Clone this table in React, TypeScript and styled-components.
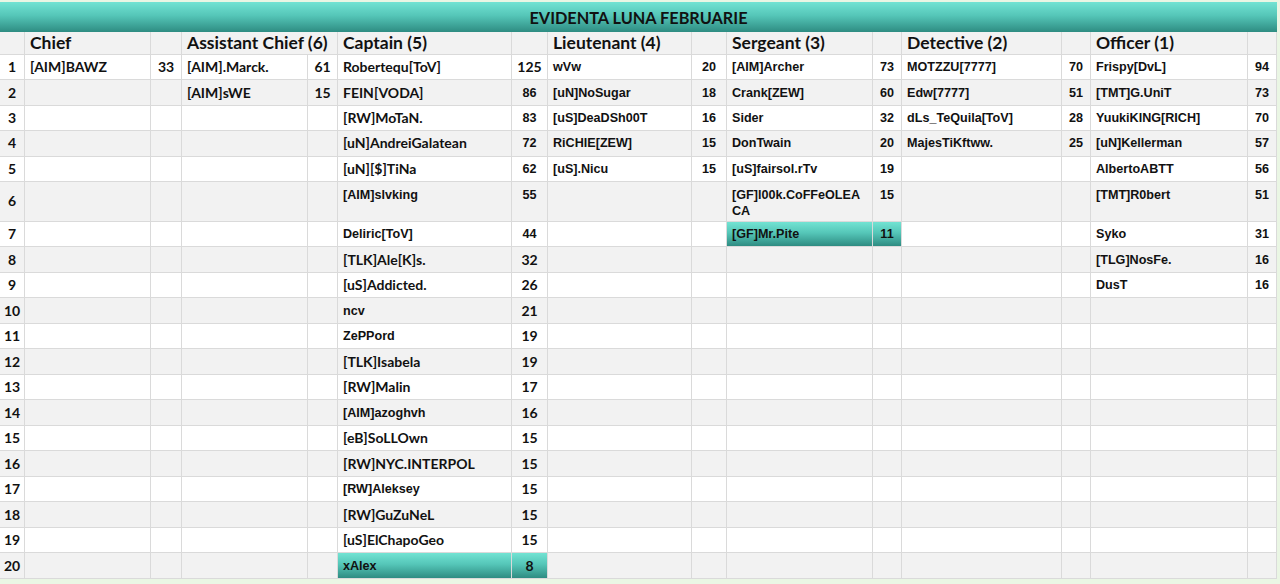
import React from "react";
import styled, { createGlobalStyle } from "styled-components";

const GlobalStyle = createGlobalStyle`
  html, body { margin: 0; padding: 0; background: #eaf6e4; }
  body { font-family: "Liberation Sans", Arial, sans-serif; color: #111; }
`;

type Font = "c" | "a";

const CAL = `"Lato", "Carlito", "Open Sans", sans-serif`;
const ARI = `"Liberation Sans", Arial, sans-serif`;
const TEAL = "linear-gradient(180deg, #72e3d3 0%, #55c6b8 45%, #2e8c82 100%)";

const Page = styled.div`
  padding-top: 2px;
  width: 1277px;
`;

const Sheet = styled.div`
  display: grid;
  grid-template-columns: 25px 126px 31px 126px 30px 174px 36px 144px 35px 146px 29px 160px 29px 157px 29px;
  grid-template-rows: 30px 23px repeat(5, 25.4px) 40px repeat(14, 25.5px);
  background: #fff;
`;

const Title = styled.div`
  grid-column: 1 / -1;
  display: flex;
  align-items: center;
  justify-content: center;
  background: ${TEAL};
  font-family: ${CAL};
  font-weight: 700;
  font-size: 16.3px;
  color: #111;
  padding-top: 1px;
`;

const Cell = styled.div<{
  $shade?: boolean;
  $hl?: boolean;
  $font?: Font;
  $center?: boolean;
  $span?: number;
  $head?: boolean;
  $top?: boolean;
  $wrap?: boolean;
}>`
  box-sizing: border-box;
  min-width: 0;
  grid-column: span ${(p) => p.$span ?? 1};
  border-right: 1px solid #dadada;
  border-bottom: 1px solid #dadada;
  padding: ${(p) => (p.$top ? "5px 5px 0 5px" : "0 5px")};
  display: flex;
  align-items: ${(p) => (p.$top ? "flex-start" : "center")};
  justify-content: ${(p) => (p.$center ? "center" : "flex-start")};
  font-family: ${(p) => (p.$font === "a" ? ARI : CAL)};
  font-weight: 700;
  font-size: ${(p) => (p.$head ? "17.5px" : p.$font === "a" ? "12.6px" : "14px")};
  line-height: 16px;
  white-space: ${(p) => (p.$wrap ? "normal" : "nowrap")};
  color: #111;
  background: ${(p) => (p.$hl ? TEAL : p.$shade ? "#f2f2f2" : "#ffffff")};
`;

type Entry = { n: string; v: string; nf?: Font; vf?: Font; hl?: boolean; wrap?: boolean };

type Column = { title: string; span?: boolean; font: Font; rows: Entry[] };

const columns: Column[] = [
  { title: "Chief", font: "c", rows: [{ n: "[AIM]BAWZ", v: "33" }] },
  {
    title: "Assistant Chief (6)",
    span: true,
    font: "c",
    rows: [
      { n: "[AIM].Marck.", v: "61" },
      { n: "[AIM]sWE", v: "15" },
    ],
  },
  {
    title: "Captain (5)",
    font: "c",
    rows: [
      { n: "Robertequ[ToV]", v: "125" },
      { n: "FEIN[VODA]", v: "86", vf: "a" },
      { n: "[RW]MoTaN.", v: "83", vf: "a" },
      { n: "[uN]AndreiGalatean", v: "72", vf: "a" },
      { n: "[uN][$]TiNa", v: "62", vf: "a" },
      { n: "[AIM]slvking", v: "55", nf: "a", vf: "a" },
      { n: "Deliric[ToV]", v: "44", nf: "a", vf: "a" },
      { n: "[TLK]Ale[K]s.", v: "32" },
      { n: "[uS]Addicted.", v: "26" },
      { n: "ncv", v: "21", nf: "a" },
      { n: "ZePPord", v: "19", nf: "a" },
      { n: "[TLK]Isabela", v: "19" },
      { n: "[RW]Malin", v: "17" },
      { n: "[AIM]azoghvh", v: "16", nf: "a" },
      { n: "[eB]SoLLOwn", v: "15" },
      { n: "[RW]NYC.INTERPOL", v: "15" },
      { n: "[RW]Aleksey", v: "15", nf: "a" },
      { n: "[RW]GuZuNeL", v: "15" },
      { n: "[uS]ElChapoGeo", v: "15" },
      { n: "xAlex", v: "8", nf: "a", hl: true },
    ],
  },
  {
    title: "Lieutenant (4)",
    font: "a",
    rows: [
      { n: "wVw", v: "20" },
      { n: "[uN]NoSugar", v: "18" },
      { n: "[uS]DeaDSh00T", v: "16" },
      { n: "RiCHIE[ZEW]", v: "15" },
      { n: "[uS].Nicu", v: "15" },
    ],
  },
  {
    title: "Sergeant (3)",
    font: "a",
    rows: [
      { n: "[AIM]Archer", v: "73" },
      { n: "Crank[ZEW]", v: "60" },
      { n: "Sider", v: "32" },
      { n: "DonTwain", v: "20" },
      { n: "[uS]fairsol.rTv", v: "19" },
      { n: "[GF]l00k.CoFFeOLEA\u200BCA", v: "15", wrap: true },
      { n: "[GF]Mr.Pite", v: "11", hl: true },
    ],
  },
  {
    title: "Detective (2)",
    font: "a",
    rows: [
      { n: "MOTZZU[7777]", v: "70" },
      { n: "Edw[7777]", v: "51" },
      { n: "dLs_TeQuila[ToV]", v: "28" },
      { n: "MajesTiKftww.", v: "25" },
    ],
  },
  {
    title: "Officer (1)",
    font: "a",
    rows: [
      { n: "Frispy[DvL]", v: "94" },
      { n: "[TMT]G.UniT", v: "73" },
      { n: "YuukiKING[RICH]", v: "70" },
      { n: "[uN]Kellerman", v: "57" },
      { n: "AlbertoABTT", v: "56" },
      { n: "[TMT]R0bert", v: "51" },
      { n: "Syko", v: "31" },
      { n: "[TLG]NosFe.", v: "16" },
      { n: "DusT", v: "16" },
    ],
  },
];

const ROWS = Array.from({ length: 20 }, (_, i) => i + 1);

export default function App() {
  return (
    <>
      <GlobalStyle />
      <Page>
        <Sheet>
          <Title>EVIDENTA LUNA FEBRUARIE</Title>

          <Cell $shade $head />
          {columns.map((c) =>
            c.span ? (
              <Cell key={c.title} $shade $head $span={2} $font="c">
                {c.title}
              </Cell>
            ) : (
              <React.Fragment key={c.title}>
                <Cell $shade $head $font="c">
                  {c.title}
                </Cell>
                <Cell $shade $head />
              </React.Fragment>
            )
          )}

          {ROWS.map((r) => {
            const shade = r % 2 === 0;
            const top = r === 6;
            return (
              <React.Fragment key={r}>
                <Cell $shade={shade} $center $font="c">
                  {r}
                </Cell>
                {columns.map((c) => {
                  const e = c.rows[r - 1];
                  return (
                    <React.Fragment key={c.title}>
                      <Cell
                        $shade={shade}
                        $top={top}
                        $hl={e?.hl}
                        $wrap={e?.wrap}
                        $font={e?.nf ?? c.font}
                      >
                        {e?.n}
                      </Cell>
                      <Cell
                        $shade={shade}
                        $top={top}
                        $hl={e?.hl}
                        $center
                        $font={e?.vf ?? c.font}
                      >
                        {e?.v}
                      </Cell>
                    </React.Fragment>
                  );
                })}
              </React.Fragment>
            );
          })}
        </Sheet>
      </Page>
    </>
  );
}
